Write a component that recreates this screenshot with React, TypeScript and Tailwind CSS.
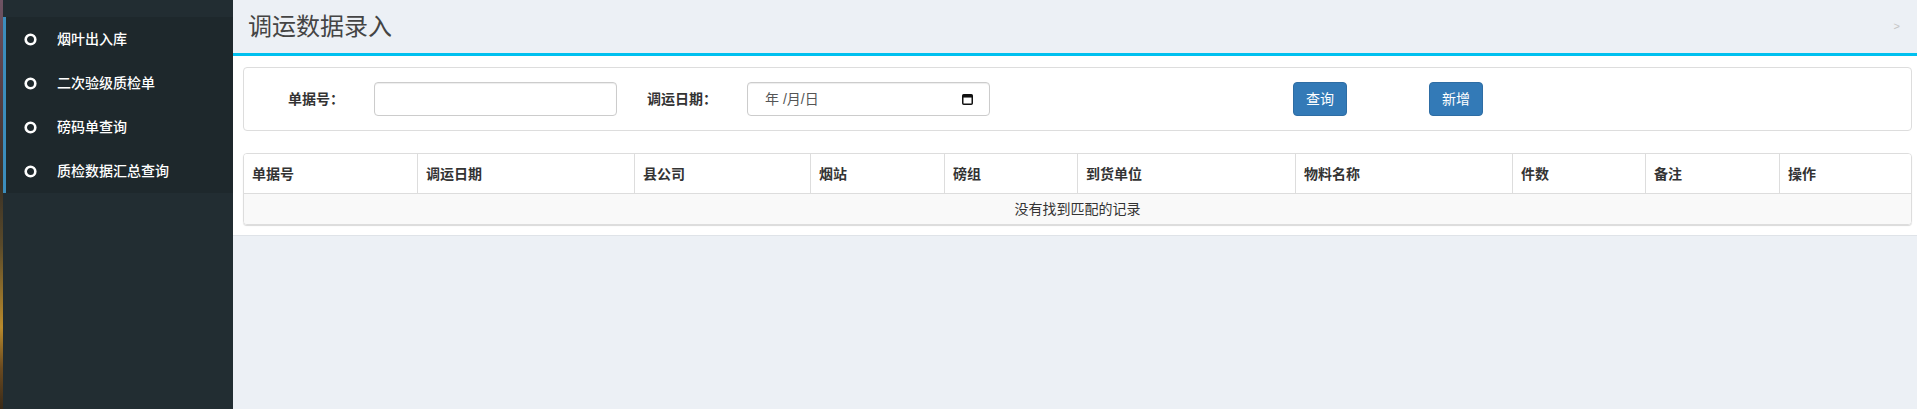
const columns = [
  { title: '单据号', w: 'w-[173px]' },
  { title: '调运日期', w: 'w-[217px]' },
  { title: '县公司', w: 'w-[176px]' },
  { title: '烟站', w: 'w-[134px]' },
  { title: '磅组', w: 'w-[133px]' },
  { title: '到货单位', w: 'w-[218px]' },
  { title: '物料名称', w: 'w-[217px]' },
  { title: '件数', w: 'w-[133px]' },
  { title: '备注', w: 'w-[134px]' },
  { title: '操作', w: 'flex-1' },
];

const menu = ['烟叶出入库', '二次验级质检单', '磅码单查询', '质检数据汇总查询'];

function CircleIcon() {
  return (
    <svg width="13" height="13" viewBox="0 0 13 13" className="shrink-0">
      <circle cx="6.5" cy="6.5" r="4.8" fill="none" stroke="#fff" strokeWidth="2.6" />
    </svg>
  );
}

function CalendarIcon() {
  return (
    <svg width="11" height="12" viewBox="0 0 11 12">
      <rect x="0.75" y="1.75" width="9.5" height="9.5" rx="1" fill="none" stroke="#111" strokeWidth="1.5" />
      <rect x="0.75" y="1.75" width="9.5" height="2.8" fill="#111" />
    </svg>
  );
}

export default function App() {
  return (
    <div className="flex h-[409px] w-[1917px] overflow-hidden font-[family-name:'Liberation_Sans','Noto_Sans_CJK_SC',sans-serif] text-[14px] text-[#333]">
      {/* background strip */}
      <div className="w-[3px] shrink-0 bg-[linear-gradient(180deg,#6e5363_0%,#5a4048_20%,#3b3226_45%,#5a4a2a_60%,#b98a2c_80%,#6a4a20_90%,#3a2a18_100%)]" />

      {/* sidebar */}
      <aside className="w-[230px] shrink-0 bg-[#222d32]">
        <div className="h-[17px]" />
        <ul className="border-l-[3px] border-[#3c8dbc] bg-[#1e282c]">
          {menu.map((m) => (
            <li key={m} className="flex h-[44px] items-center pl-[18px] text-white">
              <CircleIcon />
              <span className="ml-[20px] font-medium leading-[20px]">{m}</span>
            </li>
          ))}
        </ul>
      </aside>

      {/* main */}
      <main className="flex flex-1 flex-col bg-[#ecf0f5]">
        <div className="flex h-[53px] items-center justify-between pl-[15px] pr-[17px]">
          <h1 className="text-[24px] leading-[30px] text-[#444]">调运数据录入</h1>
          <span className="text-[11px] leading-none text-[#c4c4c4]">&gt;</span>
        </div>
        <div className="border-t-[3px] border-[#00c0ef] bg-white pb-[10px] pl-[10px] pr-[5px] pt-[11px] border-b border-b-[#dfe3e8]">
          {/* search panel */}
          <div className="flex h-[64px] items-center rounded border border-[#ddd] pl-[44px]">
            <label className="w-[86px] font-bold leading-[20px]">单据号：</label>
            <input className="h-[34px] w-[243px] rounded border border-[#ccc] px-3 shadow-[inset_0_1px_1px_rgba(0,0,0,0.075)] outline-none" />
            <label className="ml-[30px] w-[100px] font-bold leading-[20px]">调运日期：</label>
            <div className="flex h-[34px] w-[243px] items-center justify-between rounded border border-[#ccc] pl-[17px] pr-[16px] text-[#555] shadow-[inset_0_1px_1px_rgba(0,0,0,0.075)]">
              <span className="leading-[20px]">年 /月/日</span>
              <CalendarIcon />
            </div>
            <button className="ml-[303px] h-[34px] w-[54px] rounded border border-[#2e6da4] bg-[#337ab7] leading-[20px] text-white">查询</button>
            <button className="ml-[82px] h-[34px] w-[54px] rounded border border-[#2e6da4] bg-[#337ab7] leading-[20px] text-white">新增</button>
          </div>

          {/* table */}
          <div className="mt-[22px] overflow-hidden rounded border border-[#ddd] shadow-[0_1px_1px_rgba(0,0,0,0.15)]">
            <div className="flex h-[40px] border-b border-[#ddd] bg-white">
              {columns.map((c, i) => (
                <div
                  key={c.title}
                  className={`${c.w} flex items-center pl-2 font-bold leading-[20px] ${i > 0 ? 'border-l border-[#ddd]' : ''}`}
                >
                  {c.title}
                </div>
              ))}
            </div>
            <div className="flex h-[30px] items-center justify-center bg-[#f9f9f9] leading-[20px]">没有找到匹配的记录</div>
          </div>
        </div>
      </main>
    </div>
  );
}
